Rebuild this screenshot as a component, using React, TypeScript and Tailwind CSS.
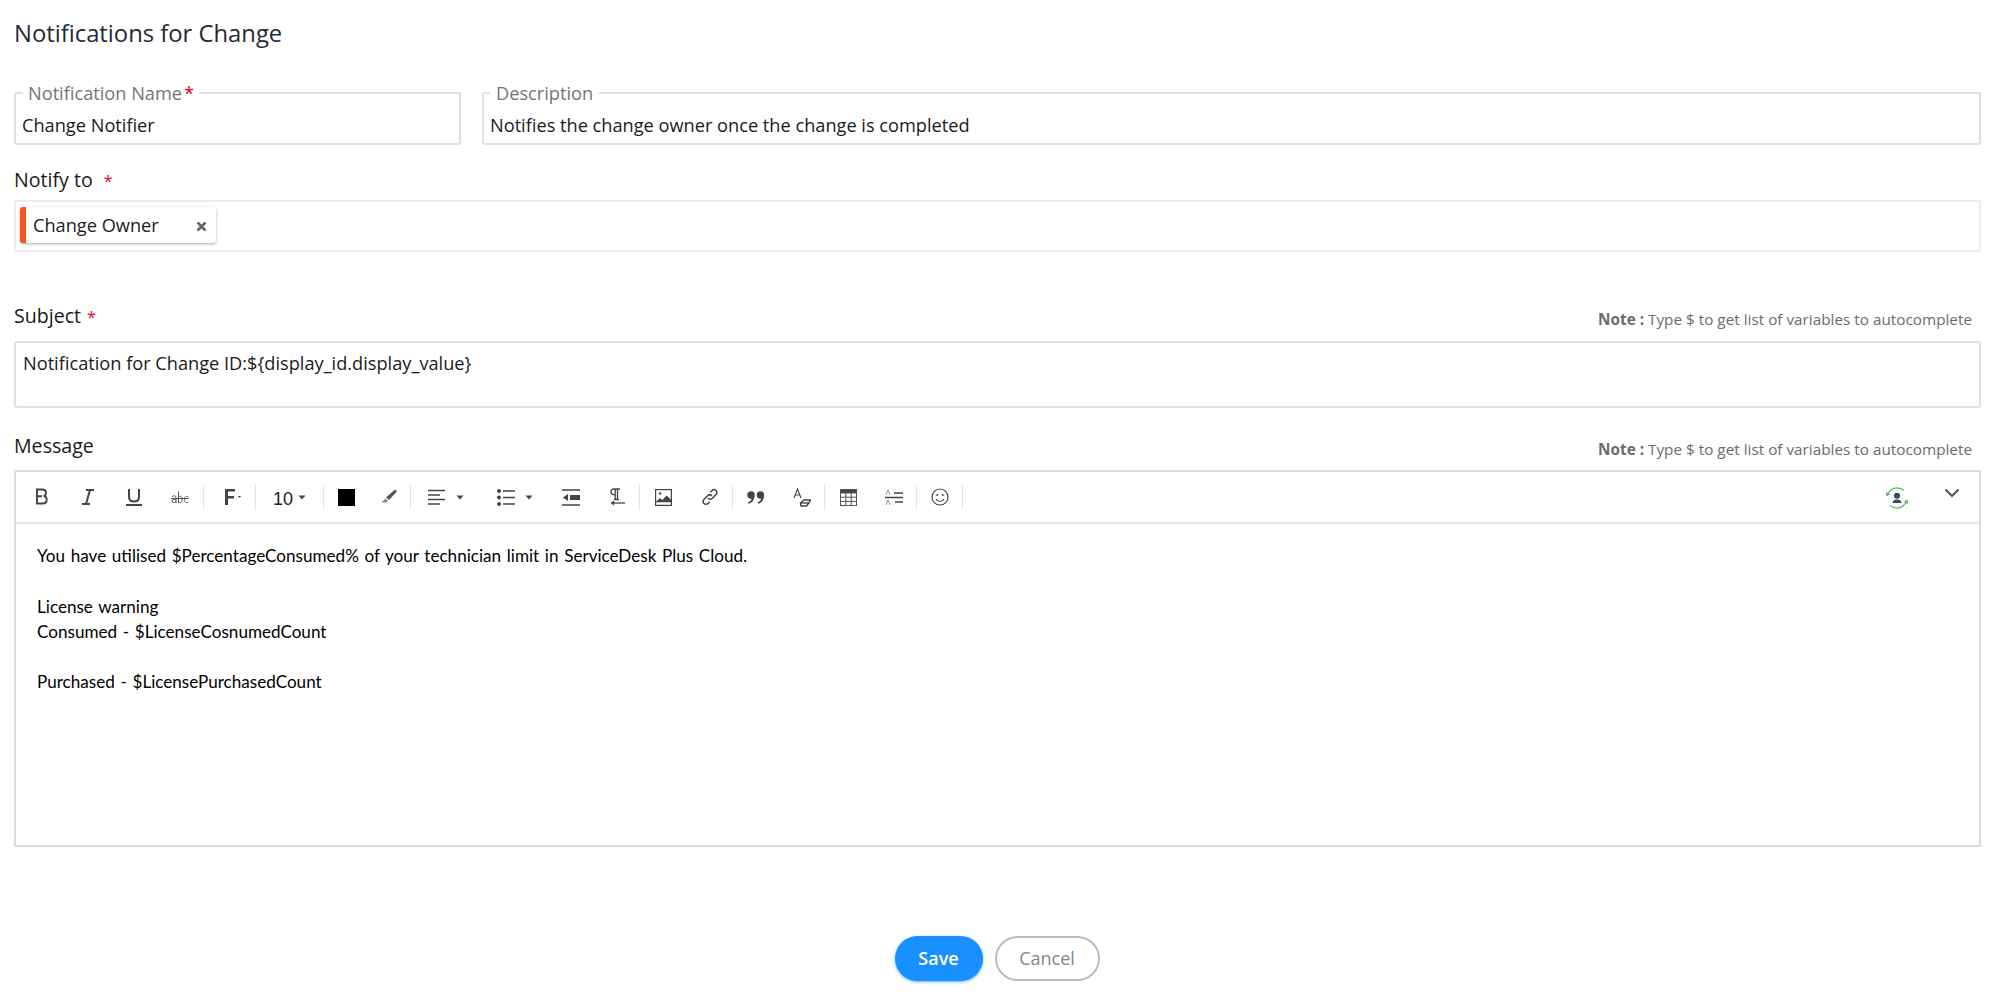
import React from "react";

const Sep = () => <div className="w-px h-[25px] bg-[#e4e4e4] shrink-0" />;

const Btn = ({ w, children }: { w: string; children: React.ReactNode }) => (
  <div className={`${w} h-full flex items-center justify-center shrink-0 text-[#333]`}>{children}</div>
);

const Caret = () => (
  <svg width="8" height="5" viewBox="0 0 8 5" className="shrink-0"><path d="M0.5 0.5h7L4 4.5z" fill="#444" /></svg>
);

const Note = () => (
  <div className="text-[15.3px] text-[#6b6b6b] mr-[10px] mt-[7px]">
    <span className="font-bold">Note : </span>Type $ to get list of variables to autocomplete
  </div>
);

const Toolbar = () => (
  <div className="h-[52px] border-b-2 border-[#e6e6e6] flex items-center pl-[3px] pr-[14px]">
    <Btn w="w-[46px]">
      <svg width="16" height="20" viewBox="0 0 16 20"><path d="M3 2.500h5.200c2.400 0 3.800 1.200 3.800 3.400 0 1.600-.9 2.700-2.300 3.100 1.900.3 3 1.600 3 3.500 0 2.500-1.600 4-4.300 4H3zM3 9.200h5" fill="none" stroke="#444" strokeWidth="1.900" /></svg>
    </Btn>
    <Btn w="w-[46px]">
      <svg width="16" height="20" viewBox="0 0 16 20"><path d="M6 3h8M2 17h8M10 3 6 17" fill="none" stroke="#444" strokeWidth="2" /></svg>
    </Btn>
    <Btn w="w-[46px]">
      <svg width="18" height="20" viewBox="0 0 18 20"><path d="M4 2v8c0 3 2 4.500 5 4.500s5-1.500 5-4.500V2" fill="none" stroke="#444" strokeWidth="2" /><path d="M1 18h16" stroke="#444" strokeWidth="2" /></svg>
    </Btn>
    <Btn w="w-[46px]">
      <svg width="18" height="18" viewBox="0 0 18 18" fill="none" stroke="#555" strokeWidth="1"><path d="M0 10.500h18" /><path d="M1 8.500c1-1 4-1 4 .8V15M5 11.500c-2-.8-4-.3-4 1.500s3 2 4 .5" /><path d="M7.500 3.500V15M7.500 9c.8-1.200 3.500-1.200 3.500 1.500v2c0 2.500-2.700 2.700-3.500 1.200" /><path d="M17.500 9c-1.500-1.200-4-.7-4 2.500s2.500 3.700 4 2.500" /></svg>
    </Btn>
    <Sep />
    <Btn w="w-[51px]">
      <svg width="20" height="18" viewBox="0 0 20 18" className="ml-[6px]"><path d="M2 1h10v2.500H5V8h6v2.500H5V17H2z" fill="#444" /><path d="M15 8h3l-1.500 2z" fill="#444" /></svg>
    </Btn>
    <Sep />
    <Btn w="w-[67px]">
      <span className="text-[18px] mt-[5px] mr-[5px] text-[#222]" style={{ fontFamily: "'Liberation Sans', sans-serif" }}>10</span>
      <Caret />
    </Btn>
    <Sep />
    <Btn w="w-[44px]"><div className="w-[17px] h-[17px] bg-black" /></Btn>
    <Btn w="w-[42px]">
      <svg width="18" height="18" viewBox="0 0 18 18"><path d="M15 1.500 17 3.500 9 12 6 9.500z" fill="#555" /><path d="M5.500 10.500 8 13l-2 1.500H1.500z" fill="#888" /></svg>
    </Btn>
    <Sep />
    <Btn w="w-[70px]">
      <svg width="18" height="17" viewBox="0 0 18 17" className="mr-[10px]" stroke="#444" strokeWidth="1.500"><path d="M0 1.500h17M0 6h12M0 10.500h17M0 15h12" /></svg>
      <Caret />
    </Btn>
    <Btn w="w-[67px]">
      <svg width="18" height="17" viewBox="0 0 18 17" className="mr-[10px]" stroke="#444" strokeWidth="1.500"><circle cx="2" cy="2" r="2" fill="#444" stroke="none" /><circle cx="2" cy="8.500" r="2" fill="#444" stroke="none" /><circle cx="2" cy="15" r="2" fill="#444" stroke="none" /><path d="M6 2h12M6 8.500h12M6 15h12" /></svg>
      <Caret />
    </Btn>
    <Btn w="w-[46px]">
      <svg width="18" height="17" viewBox="0 0 18 17"><path d="M0 1h18M0 16h18" stroke="#444" strokeWidth="1.700" /><path d="M1 8.500 6 5v7z" fill="#444" /><rect x="8" y="6" width="10" height="5" fill="#444" /></svg>
    </Btn>
    <Btn w="w-[45px]">
      <svg width="16" height="18" viewBox="0 0 16 18" className="ml-[3px]"><path d="M7.500 1H3.800C2 1 1 2.200 1 3.800s1 2.800 2.800 2.800h1.400V1M7.500 1v10.500M5.200 1v10.500M4 11.500h5M10 1H4" fill="none" stroke="#444" strokeWidth="1.300" /><path d="M15 15H3" stroke="#444" strokeWidth="1.300" /><path d="M.5 15 4 12.500v5z" fill="#444" /></svg>
    </Btn>
    <Sep />
    <Btn w="w-[46px]">
      <svg width="17" height="17" viewBox="0 0 17 17" fill="none" stroke="#444"><rect x=".6" y=".6" width="15.800" height="15.800" strokeWidth="1.200" /><circle cx="5" cy="4.500" r="1.200" fill="#444" stroke="none" /><path d="M.6 13 5 9l2.500 2L11.500 6.500 16.400 11v2.200H.6z" fill="#444" stroke="none" /></svg>
    </Btn>
    <Btn w="w-[46px]">
      <svg width="18" height="18" viewBox="0 0 18 18" fill="none" stroke="#444" strokeWidth="1.500" strokeLinecap="round" className="ml-[2px]"><path d="M7.500 10.500c1.200 1.200 2.600 1 3.600 0l4-4c1.200-1.200 1.200-2.900 0-4s-2.900-1.200-4 0L9.800 3.800" /><path d="M10.500 7.500c-1.200-1.200-2.600-1-3.600 0l-4 4c-1.200 1.200-1.200 2.900 0 4s2.900 1.200 4 0l1.300-1.300" /></svg>
    </Btn>
    <Sep />
    <Btn w="w-[45px]">
      <svg width="18" height="13" viewBox="0 0 18 13" fill="#444"><circle cx="4" cy="4" r="3.700" /><path d="M7.500 4.500C7.500 9 5 12 1.500 12.800L1 11.600C3 10.800 4.500 9 4.800 7z" /><circle cx="13.500" cy="4" r="3.700" /><path d="M17 4.500C17 9 14.500 12 11 12.800L10.500 11.600C12.500 10.800 14 9 14.300 7z" /></svg>
    </Btn>
    <Btn w="w-[46px]">
      <svg width="18" height="19" viewBox="0 0 18 19" fill="none" stroke="#444" strokeWidth="1.100" className="ml-[2px]"><path d="M1 10 4.500 1 8 10M2.300 7h4.500" /><path d="M7.500 15 11 12h6.500l-1.700 3-2.300 3H8z" strokeWidth="1.400" /><path d="M7.500 15h8" strokeWidth="1.400" /></svg>
    </Btn>
    <Sep />
    <Btn w="w-[46px]">
      <svg width="17" height="17" viewBox="0 0 17 17" fill="none" stroke="#555"><rect x=".5" y=".5" width="16" height="16" /><rect x=".5" y=".5" width="16" height="3.500" fill="#444" /><path d="M5.800 4v12.500M11.200 4v12.500M.5 8.200h16M.5 12.400h16" /></svg>
    </Btn>
    <Btn w="w-[45px]">
      <svg width="18" height="17" viewBox="0 0 18 17"><path d="M0 8.500h18" stroke="#444" strokeWidth="1.500" /><path d="M9 4h9M10 13h8" stroke="#444" strokeWidth="1.500" /><path d="M1 6 3 1l2 5M1 16l2-5 2 5" fill="none" stroke="#777" strokeWidth=".8" /></svg>
    </Btn>
    <Sep />
    <Btn w="w-[45px]">
      <svg width="18" height="18" viewBox="0 0 18 18" fill="none" stroke="#444" strokeWidth="1.200"><circle cx="9" cy="9" r="8" /><circle cx="6.200" cy="7" r="1" fill="#444" stroke="none" /><circle cx="11.800" cy="7" r="1" fill="#444" stroke="none" /><path d="M5 11c1 1.800 2.500 2.500 4 2.500s3-.7 4-2.500" /></svg>
    </Btn>
    <Sep />
    <div className="ml-auto flex items-center">
      <svg width="24" height="24" viewBox="0 0 26 26" fill="none" className="mr-[35px] mt-[2px]">
        <path d="M2.500 10C4 5.500 8.500 2 13 2c3 0 5.500 1 7.500 3M23.500 16c-1.500 4.500-6 8-10.500 8-3 0-5.500-1-7.500-3" stroke="#5cb85c" strokeWidth="1.300" />
        <path d="M1 6.500 5.500 9 1.500 11.500zM25 19.500 20.500 17 24.500 14.500z" fill="#5cb85c" />
        <circle cx="13" cy="10.500" r="3.300" fill="#3b4a5c" />
        <path d="M8 18.500c.5-3 2.200-4 5-4s4.500 1 5 4z" fill="#3b4a5c" />
      </svg>
      <svg width="16" height="10" viewBox="0 0 16 10" fill="none" className="mb-[8px] mr-[5px]"><path d="M1.500 1.500 8 8l6.500-6.500" stroke="#555" strokeWidth="2.200" /></svg>
    </div>
  </div>
);

export default function App() {
  return (
    <div className="w-[1996px] h-[1008px] bg-white overflow-hidden px-[14px] pt-[18px] text-[#1a1a1a]" style={{ fontFamily: "'Open Sans', sans-serif" }}>
      <h1 className="text-[23.800px] leading-[30px] font-normal text-[#1f2a36]">Notifications for Change</h1>

      <div className="flex gap-[21px] mt-[33px] mr-[1px]">
        <fieldset className="w-[447px] h-[64px] border-2 border-[#e0e0e0] rounded-[3px] px-[6px]">
          <legend className="ml-[1px] px-[5px] text-[18.200px] leading-[24px] text-[#757575]">
            Notification Name<span className="text-[#e6001f] ml-[2px]">*</span>
          </legend>
          <div className="text-[18.200px] leading-[24px] mt-[8px]">Change Notifier</div>
        </fieldset>
        <fieldset className="flex-1 h-[64px] border-2 border-[#e0e0e0] rounded-[3px] px-[6px]">
          <legend className="px-[6px] text-[18.200px] leading-[24px] text-[#757575]">Description</legend>
          <div className="text-[18.200px] leading-[24px] mt-[8px]">Notifies the change owner once the change is completed</div>
        </fieldset>
      </div>

      <div className="text-[19.600px] leading-[26px] mt-[22px]">
        Notify to<span className="text-[#e6001f] ml-[11px] text-[16px]">*</span>
      </div>
      <div className="h-[52px] mt-[6px] mr-[1px] border-2 border-[#ebebeb] rounded-[2px] pl-[4px] pt-[5px]">
        <div className="w-[196px] h-[36px] flex items-center bg-white border-l-[6px] border-[#f4581f] rounded-[3px] shadow-[0_1px_3px_rgba(0,0,0,0.35)] pl-[7px] pr-[9px]">
          <span className="text-[18.200px] leading-[24px]">Change Owner</span>
          <svg width="11" height="11" viewBox="0 0 11 11" className="ml-auto mt-[2px]"><path d="M1.500 1.500l8 8M9.500 1.500l-8 8" stroke="#666" strokeWidth="2.600" /></svg>
        </div>
      </div>

      <div className="flex items-center justify-between mt-[51px] h-[26px]">
        <div className="text-[19.600px] leading-[26px]">
          Subject<span className="text-[#e6001f] ml-[6px] text-[16px]">*</span>
        </div>
        <Note />
      </div>
      <div className="h-[67px] mt-[12px] mr-[1px] border-2 border-[#e0e0e0] rounded-[3px] px-[7px] pt-[8px] text-[18.200px] leading-[24px]">
        {"Notification for Change ID:${display_id.display_value}"}
      </div>

      <div className="flex items-center justify-between mt-[25px] h-[26px]">
        <div className="text-[19.600px] leading-[26px]">Message</div>
        <Note />
      </div>
      <div className="h-[377px] mt-[11px] mr-[1px] border-2 border-[#dcdcdc]">
        <Toolbar />
        <div className="pl-[21px] pt-[19px] text-[17.100px] [word-spacing:1.300px] leading-[25.300px] text-black" style={{ fontFamily: "Lato, sans-serif" }}>
          <div>You have utilised $PercentageConsumed% of your technician limit in ServiceDesk Plus Cloud.</div>
          <div className="h-[25.300px]" />
          <div>License warning</div>
          <div>Consumed - $LicenseCosnumedCount</div>
          <div className="h-[25.300px]" />
          <div>Purchased - $LicensePurchasedCount</div>
        </div>
      </div>

      <div className="flex justify-center gap-[12px] mt-[89px] pr-[2px]">
        <button className="w-[88px] h-[45px] rounded-full bg-[#1890ff] text-white text-[18px] font-semibold shadow-[0_1px_3px_rgba(24,144,255,0.7)]">Save</button>
        <button className="w-[105px] h-[45px] rounded-full bg-white border-2 border-[#b4bcc6] text-[#7b8794] text-[18px]">Cancel</button>
      </div>
    </div>
  );
}
